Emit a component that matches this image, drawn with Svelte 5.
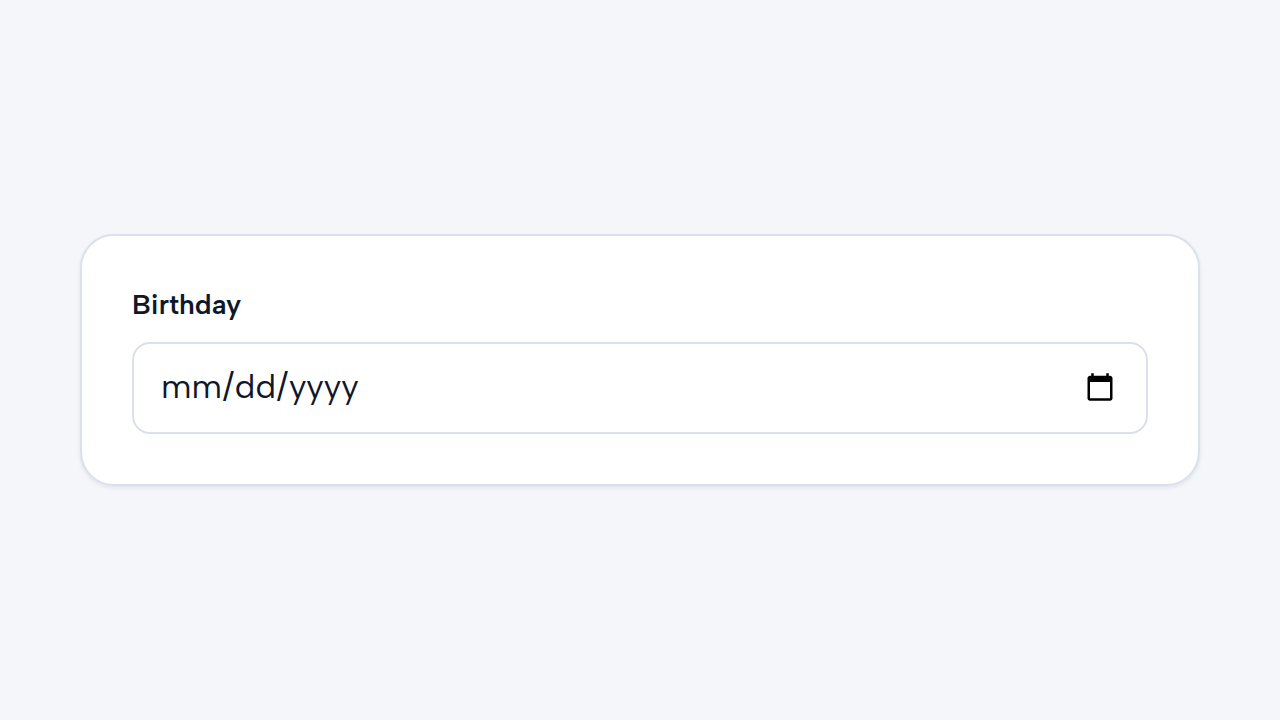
<script lang="ts">
  let birthday = $state('');
</script>

<main class="page">
  <div class="card">
    <label class="label" for="birthday">Birthday</label>
    <input class="input" id="birthday" type="date" bind:value={birthday} />
  </div>
</main>

<style>
  :global(body) {
    background: #f4f6fa;
  }

  .page {
    box-sizing: border-box;
    display: flex;
    align-items: center;
    min-height: 100vh;
    padding: 80px;
    font-family: 'Albert Sans', Lato, sans-serif;
    color: #0f172a;
  }

  .card {
    box-sizing: border-box;
    display: flex;
    flex-direction: column;
    gap: 20px;
    width: 100%;
    padding: 50px;
    background: #fff;
    border: 2px solid #dce0ea;
    border-radius: 34px;
    box-shadow: 0 2px 4px rgba(15, 23, 42, 0.08);
  }

  .label {
    font-size: 28px;
    font-weight: 600;
    line-height: 36px;
  }

  .input {
    box-sizing: border-box;
    width: 100%;
    height: 92px;
    padding: 16px 28px 16px 26px;
    background: #fff;
    border: 2px solid #dce0ea;
    border-radius: 18px;
    font: inherit;
    font-size: 34px;
    color: inherit;
  }

  .input::-webkit-datetime-edit {
    padding-bottom: 4px;
  }

  .input::-webkit-calendar-picker-indicator {
    font-size: 32px;
  }
</style>
